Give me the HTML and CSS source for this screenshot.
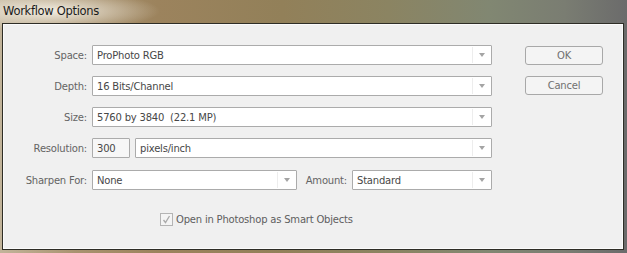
FILE: index.html
```html
<!DOCTYPE html>
<html lang="en">
<head>
    <meta charset="UTF-8">
    <title>Workflow Options</title>
    <link rel="stylesheet" href="styles.css">
</head>
<body>

    <div class="window">
        <div class="titlebar">Workflow Options</div>

        <div class="panel">
            <div class="form">
                <div class="fields">
                    <span class="label">Space:</span>
                    <div class="select"><span class="value">ProPhoto RGB</span><span class="arrow"></span></div>

                    <span class="label">Depth:</span>
                    <div class="select"><span class="value">16 Bits/Channel</span><span class="arrow"></span></div>

                    <span class="label">Size:</span>
                    <div class="select"><span class="value">5760 by 3840&nbsp; (22.1 MP)</span><span class="arrow"></span></div>

                    <span class="label">Resolution:</span>
                    <div class="line">
                        <div class="textbox">300</div>
                        <div class="select grow"><span class="value">pixels/inch</span><span class="arrow"></span></div>
                    </div>

                    <span class="label">Sharpen For:</span>
                    <div class="line">
                        <div class="select sharpen"><span class="value">None</span><span class="arrow"></span></div>
                        <span class="label amount">Amount:</span>
                        <div class="select level"><span class="value">Standard</span><span class="arrow"></span></div>
                    </div>
                </div>

                <div class="actions">
                    <button>OK</button>
                    <button>Cancel</button>
                </div>
            </div>

            <div class="smart">
                <span class="check">
                    <svg width="11" height="11" viewBox="0 0 11 11"><path d="M2.5 6 L4.5 8.5 L8.5 2" fill="none" stroke="#aaa" stroke-width="1.3"/></svg>
                </span>
                <span>Open in Photoshop as Smart Objects</span>
            </div>
        </div>
    </div>

</body>
</html>
```

FILE: styles.css
```css
body {
    margin: 0;
    font-family: "DejaVu Sans", sans-serif;
    font-size: 10px;
    letter-spacing: -0.2px;
}

.window {
    width: 627px;
    height: 253px;
    background:
        radial-gradient(ellipse 110px 20px at 50px 11px, rgba(246, 242, 232, 0.95), rgba(246, 242, 232, 0)),
        linear-gradient(90deg, #c2b49a 0%, #a99370 12%, #9c835d 25%, #928059 45%, #8b8462 62%, #818772 78%, #7a7d72 90%, #6b6b6b 100%);
}

.titlebar {
    height: 23px;
    padding-left: 3px;
    line-height: 22px;
    font-size: 11.5px;
    letter-spacing: -0.3px;
    color: #1a1a1a;
}

.panel {
    margin: 0 3px 0 2px;
    height: 225px;
    background: #f0f0f0;
    border: 1px solid #2e2d26;
    box-shadow: inset 0 0 0 1px #fbfbfb;
}

.form {
    display: flex;
    padding-top: 21px;
}

.fields {
    display: grid;
    grid-template-columns: 84px 400px;
    column-gap: 5px;
    row-gap: 11px;
    align-items: center;
}

.label {
    text-align: right;
    color: #646464;
}

.select, .textbox {
    height: 18px;
    border: 1px solid #ababab;
    border-radius: 1px;
    background: #fff;
    color: #474747;
    display: flex;
    align-items: center;
}

.value {
    flex: 1;
    padding-left: 4px;
    white-space: nowrap;
}

.arrow {
    width: 18px;
    height: 16px;
    border-left: 1px solid #ededed;
    display: flex;
    align-items: center;
    justify-content: center;
}

.arrow::after {
    content: "";
    border-left: 3.5px solid transparent;
    border-right: 3.5px solid transparent;
    border-top: 4px solid #a4a4a4;
}

.line {
    display: flex;
    gap: 5px;
}

.textbox {
    width: 32px;
    padding-left: 4px;
    background: #f7f7f7;
}

.grow {
    flex: 1;
}

.line .sharpen {
    width: 203px;
}

.amount {
    flex: 1;
    align-self: center;
}

.level {
    width: 138px;
}

.fields > :nth-last-child(-n+2) {
    margin-top: 1px;
}

.actions {
    display: flex;
    flex-direction: column;
    gap: 11px;
    margin-left: 33px;
    padding-top: 1px;
}

button {
    width: 78px;
    height: 19px;
    padding: 0;
    border: 1px solid #a8a8a8;
    border-radius: 3px;
    background: #f4f4f4;
    font-family: inherit;
    font-size: 10px;
    letter-spacing: -0.2px;
    color: #707070;
}

.smart {
    display: flex;
    align-items: center;
    gap: 3px;
    margin-top: 23px;
    padding-left: 157px;
    color: #5e5e5e;
}

.check {
    width: 11px;
    height: 11px;
    border: 1px solid #b4b4b4;
    background: #f4f4f4;
    display: flex;
}
```
